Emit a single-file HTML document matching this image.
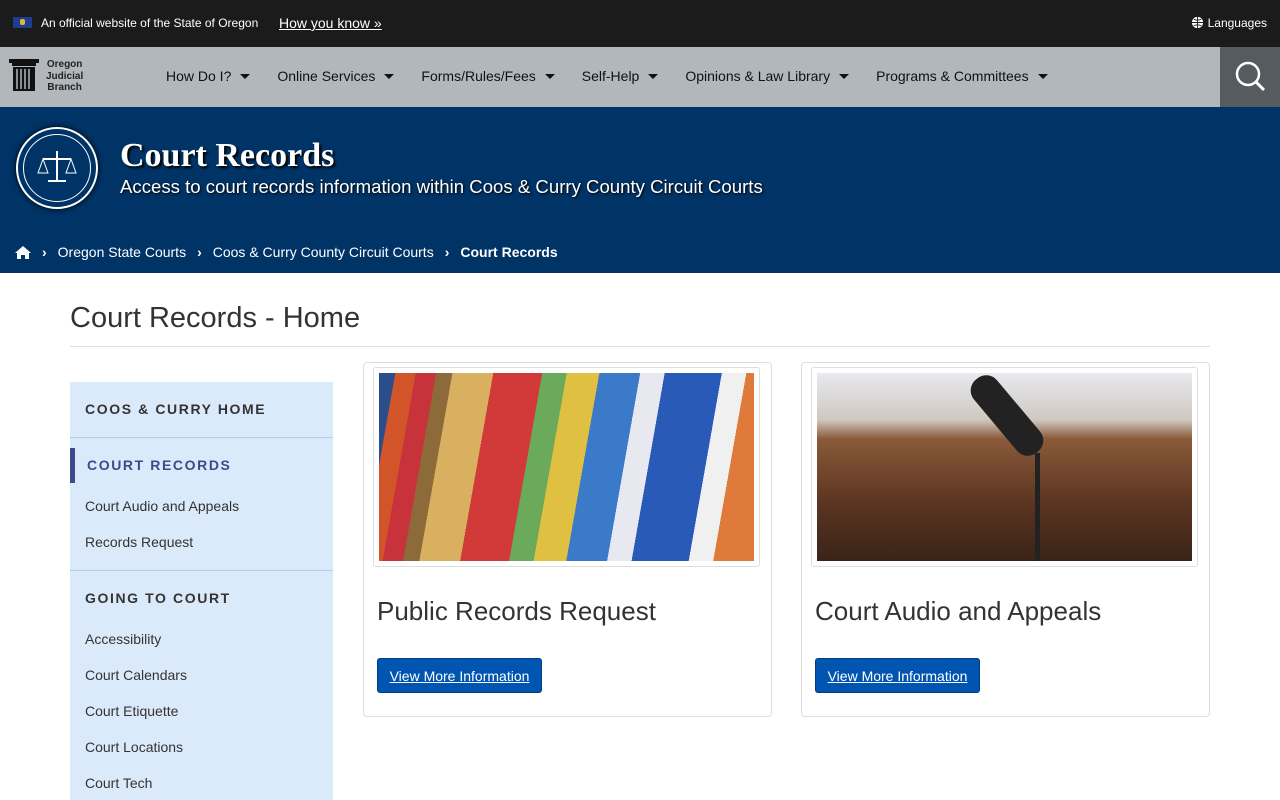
<!DOCTYPE html>
<html><head><meta charset="utf-8"><style>
*{box-sizing:border-box;margin:0;padding:0}
body{width:1280px;height:800px;overflow:hidden;font-family:"Liberation Sans",Arial,sans-serif;background:#fff;color:#222}
.top{height:47px;background:#1b1b1b;color:#fff;position:relative;font-size:12px}
.top .flag{position:absolute;left:13px;top:17px;width:19px;height:11px;background:#1f3d8f}
.top .flag:after{content:"";position:absolute;left:7px;top:2px;width:5px;height:6px;background:#e2b53a;border-radius:2px}
.top .off{position:absolute;left:41px;top:16px}
.top .how{position:absolute;left:279px;top:15px;font-size:14px;text-decoration:underline}
.top .lang{position:absolute;right:13px;top:16px}
.top .lang svg{vertical-align:-2px;margin-right:4px}
.nav{height:60px;background:#b1b7bb;position:relative}
.logo{position:absolute;left:9px;top:12px}
.logot{position:absolute;left:46px;top:12px;font-size:10px;font-weight:bold;line-height:11.5px;text-align:center;color:#222}
.menu{position:absolute;left:166px;top:21px;font-size:14px;color:#111;display:flex}
.menu span{margin-right:27px}
.menu span:after{content:"";display:inline-block;border:5px solid transparent;border-top:5px solid #111;border-bottom:0;margin-left:9px;vertical-align:2px}
.srch{position:absolute;right:0;top:0;width:60px;height:60px;background:#555b5e}
.hero{height:166px;background:#003366;position:relative;color:#fff}
.seal{position:absolute;left:16px;top:20px;width:82px;height:82px;border-radius:50%;border:2px solid #fff;background:#003366;box-shadow:0 0 6px #000}
.seal:after{content:"";position:absolute;left:5px;top:5px;right:5px;bottom:5px;border:1px solid #fff;border-radius:50%}
.hero h1{position:absolute;left:120px;top:30px;font-family:"Liberation Serif",serif;font-size:34px;font-weight:bold;text-shadow:2px 2px 2px #000}
.hero .sub{position:absolute;left:120px;top:69px;font-size:18.6px;text-shadow:1px 1px 2px #000}
.bc{position:absolute;left:15px;top:137px;font-size:14px;display:flex;align-items:center}
.bc .s{margin:0 11px;font-size:14px;font-weight:bold}
h2.pt{position:absolute;left:70px;top:302px;font-size:29px;font-weight:normal;color:#333}
.hr{position:absolute;left:70px;top:346px;width:1140px;height:1px;background:#ddd}
.side{position:absolute;left:70px;top:382px;width:263px;height:418px;background:#dbeafb}
.side .h{font-size:14px;font-weight:bold;letter-spacing:1.6px;color:#333;padding-left:15px}
.side .l{font-size:14px;color:#333;padding-left:15px;position:absolute}
.side .line{position:absolute;left:0;width:263px;height:1px;background:#b9cde0}
.card{position:absolute;top:362px;width:409px;height:355px;border:1px solid #ddd;border-radius:4px}
.img{position:absolute;left:9px;top:4px;width:387px;height:200px;border:1px solid #ddd;padding:5px;border-radius:3px}
.img div{width:100%;height:100%}
.card h3{position:absolute;left:13px;top:233px;font-size:26px;font-weight:normal;color:#333}
.btn{position:absolute;left:13px;top:295px;width:165px;height:35px;background:#0055b0;border-radius:3px;color:#fff;font-size:14px;text-decoration:underline;text-align:center;line-height:34px;border:1px solid #003f80}
</style></head><body>
<div class="top"><div class="flag"></div><div class="off">An official website of the State of Oregon</div><div class="how">How you know »</div>
<div class="lang"><svg width="13" height="13" viewBox="0 0 14 14"><circle cx="7" cy="7" r="6" fill="#fff"/><path d="M1 7h12M7 1v12M3 3.5q4 2 8 0M3 10.5q4-2 8 0" stroke="#1b1b1b" fill="none"/></svg>Languages</div></div>
<div class="nav">
<svg class="logo" width="30" height="34" viewBox="0 0 30 34"><rect x="0" y="0" width="30" height="4" fill="#111"/><rect x="3" y="4" width="24" height="3" fill="#111"/><rect x="4" y="8" width="22" height="24" fill="#111"/><path d="M8 10v20M12 10v20M16 10v20M20 10v20" stroke="#b1b7bb" stroke-width="1.5"/></svg>
<div class="logot">Oregon<br>Judicial<br>Branch</div>
<div class="menu"><span>How Do I?</span><span>Online Services</span><span>Forms/Rules/Fees</span><span>Self-Help</span><span>Opinions &amp; Law Library</span><span>Programs &amp; Committees</span></div>
<div class="srch"><svg width="60" height="60" viewBox="0 0 60 60"><circle cx="28" cy="27" r="11" stroke="#fff" stroke-width="2.5" fill="none"/><path d="M36 35l8 8" stroke="#fff" stroke-width="3"/></svg></div>
</div>
<div class="hero"><div class="seal"><svg width="78" height="78" viewBox="0 0 78 78" style="position:absolute;left:0;top:0"><path d="M39 22v30M25 30h28M30 52h18" stroke="#fff" stroke-width="2"/><path d="M25 30l-5 14h10zM53 30l-5 14h10z" stroke="#fff" fill="none"/></svg></div>
<h1>Court Records</h1><div class="sub">Access to court records information within Coos &amp; Curry County Circuit Courts</div>
<div class="bc"><svg width="16" height="14" viewBox="0 0 16 14"><path d="M8 1L0 8h2v6h4v-4h4v4h4V8h2z" fill="#fff"/></svg><span class="s">›</span>Oregon State Courts<span class="s">›</span>Coos &amp; Curry County Circuit Courts<span class="s">›</span><b>Court Records</b></div>
</div>
<h2 class="pt">Court Records - Home</h2><div class="hr"></div>
<div class="side">
<div class="h" style="position:absolute;top:19px">COOS &amp; CURRY HOME</div>
<div class="line" style="top:55px"></div>
<div style="position:absolute;left:0;top:66px;width:5px;height:35px;background:#3c4a8a"></div>
<div class="h" style="position:absolute;top:75px;left:2px;color:#3c4a8a">COURT RECORDS</div>
<div class="l" style="top:116px">Court Audio and Appeals</div>
<div class="l" style="top:152px">Records Request</div>
<div class="line" style="top:188px"></div>
<div class="h" style="position:absolute;top:208px">GOING TO COURT</div>
<div class="l" style="top:249px">Accessibility</div>
<div class="l" style="top:285px">Court Calendars</div>
<div class="l" style="top:321px">Court Etiquette</div>
<div class="l" style="top:357px">Court Locations</div>
<div class="l" style="top:393px">Court Tech</div>
</div>
<div class="card" style="left:363px"><div class="img"><div style="background:linear-gradient(100deg,#2a4e8c 0 4%,#d2552a 4% 9%,#c8323a 9% 14%,#8c6a3a 14% 18%,#d8b060 18% 28%,#d23a3a 28% 40%,#6aaa5a 40% 46%,#e0c040 46% 54%,#3a7ac8 54% 64%,#e8e8f0 64% 70%,#2a5ab8 70% 84%,#f0f0f0 84% 90%,#e07a3a 90%)"></div></div>
<h3>Public Records Request</h3><div class="btn">View More Information</div></div>
<div class="card" style="left:801px"><div class="img"><div style="background:linear-gradient(180deg,#e8eaee 0%,#cfc8c0 25%,#8a5a3a 35%,#5a3420 70%,#3a2418 100%);position:relative;overflow:hidden"><div style="position:absolute;left:175px;top:-5px;width:30px;height:95px;background:#222;border-radius:14px;transform:rotate(-40deg)"></div><div style="position:absolute;left:218px;top:80px;width:5px;height:110px;background:#222"></div></div></div>
<h3>Court Audio and Appeals</h3><div class="btn">View More Information</div></div>
</body></html>
